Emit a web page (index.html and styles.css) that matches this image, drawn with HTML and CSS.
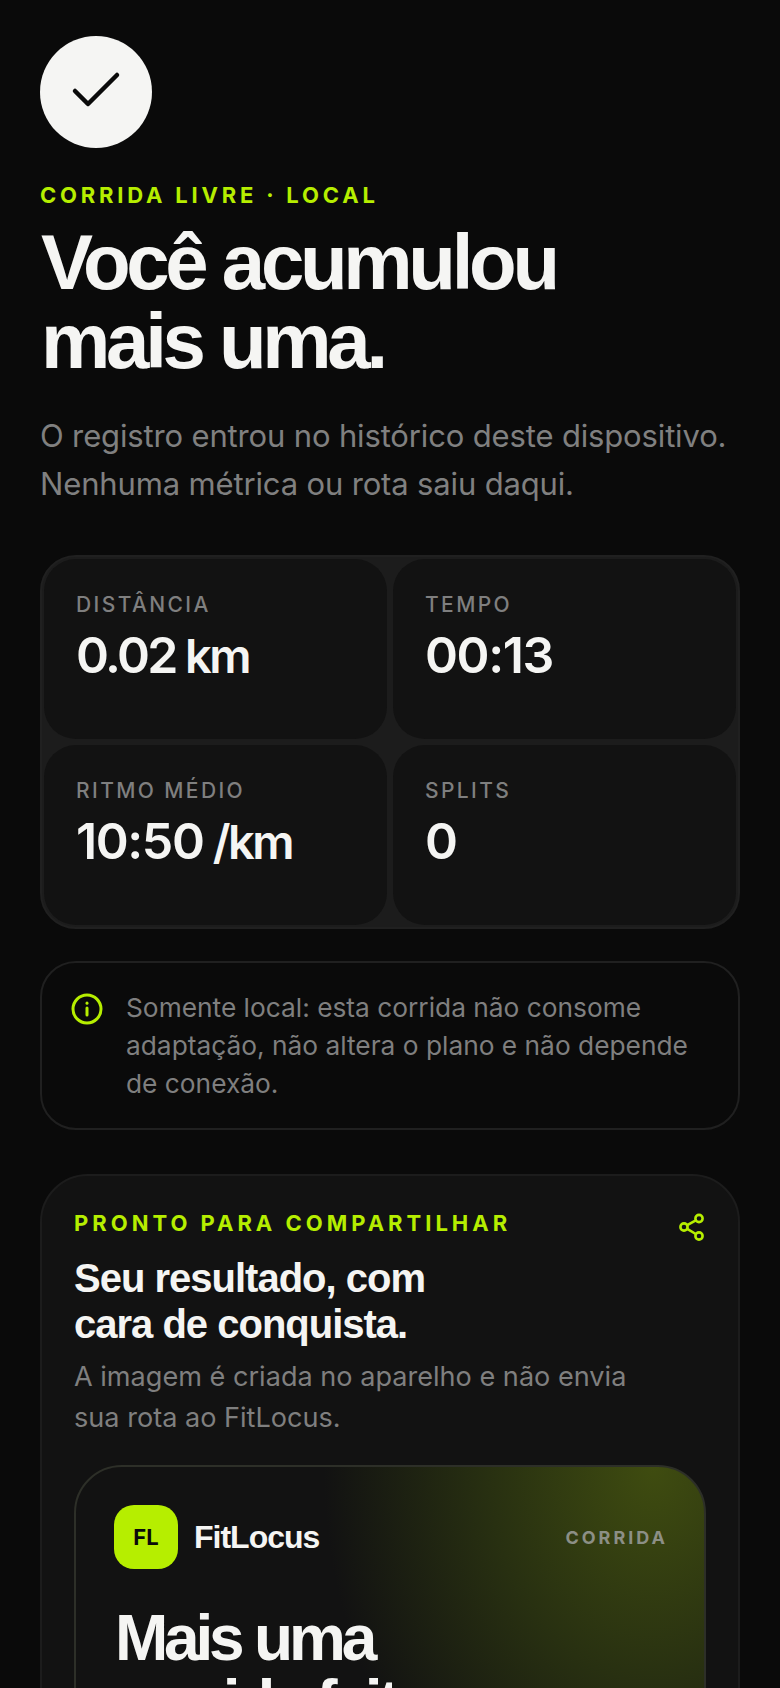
FILE: index.html
```html
<!DOCTYPE html>
<html lang="pt-BR">
<head>
    <meta charset="UTF-8">
    <meta name="viewport" content="width=device-width, initial-scale=1.0">
    <title>Corrida concluída</title>
    <link rel="stylesheet" href="styles.css">
</head>
<body>
    <main class="page">
        <div class="done-badge">
            <svg width="56" height="56" viewBox="0 0 56 56" fill="none" stroke="#0a0a0a" stroke-width="4.5" stroke-linecap="round" stroke-linejoin="round">
                <path d="M7 27 L20 40 L49 11"/>
            </svg>
        </div>

        <p class="eyebrow">CORRIDA LIVRE · LOCAL</p>
        <h1 class="title">Você acumulou<br>mais uma.</h1>
        <p class="lead">O registro entrou no histórico deste dispositivo.<br>Nenhuma métrica ou rota saiu daqui.</p>

        <section class="stats">
            <div class="stat">
                <div class="stat-label">DISTÂNCIA</div>
                <div class="stat-value"><span class="tight">0.02</span> <span class="unit">km</span></div>
            </div>
            <div class="stat">
                <div class="stat-label">TEMPO</div>
                <div class="stat-value">00:13</div>
            </div>
            <div class="stat">
                <div class="stat-label">RITMO MÉDIO</div>
                <div class="stat-value">10:50 <span class="unit">/km</span></div>
            </div>
            <div class="stat">
                <div class="stat-label">SPLITS</div>
                <div class="stat-value">0</div>
            </div>
        </section>

        <section class="notice">
            <svg class="notice-icon" width="32" height="32" viewBox="0 0 32 32" fill="none" stroke="#b6ee00" stroke-width="3" stroke-linecap="round">
                <circle cx="16" cy="16" r="14"/>
                <path d="M16 15 V22"/>
                <path d="M16 10 V10.2"/>
            </svg>
            <p class="notice-text">Somente local: esta corrida não consome adaptação, não altera o plano e não depende de conexão.</p>
        </section>

        <section class="share">
            <div class="share-head">
                <div>
                    <p class="share-eyebrow">PRONTO PARA COMPARTILHAR</p>
                    <h2 class="share-title">Seu resultado, com<br>cara de conquista.</h2>
                </div>
                <svg class="share-icon" width="28" height="28" viewBox="0 0 28 28" fill="none" stroke="#b6ee00" stroke-width="2.6" stroke-linecap="round">
                    <circle cx="21" cy="5.5" r="3.6"/>
                    <circle cx="6" cy="14" r="3.6"/>
                    <circle cx="21" cy="23" r="3.6"/>
                    <path d="M9.2 12.2 L17.8 7.3"/>
                    <path d="M9.2 15.8 L17.8 21"/>
                </svg>
            </div>
            <p class="share-text">A imagem é criada no aparelho e não envia<br>sua rota ao FitLocus.</p>

            <div class="preview">
                <div class="preview-head">
                    <div class="brand">
                        <div class="brand-logo">FL</div>
                        <div class="brand-name">FitLocus</div>
                    </div>
                    <div class="preview-tag">CORRIDA</div>
                </div>
                <div class="preview-title">Mais uma<br>corrida feita.</div>
            </div>
        </section>
    </main>
</body>
</html>
```

FILE: styles.css
```css
html, body {
    margin: 0;
    padding: 0;
    background-color: #0a0a0a;
}
body {
    font-family: Inter, "Liberation Sans", sans-serif;
    color: #f5f5f3;
}
p, h1, h2 {
    margin: 0;
}
.page {
    height: 1688px;
    overflow: hidden;
    padding: 36px 40px 0;
    box-sizing: border-box;
}

/* top block */
.done-badge {
    width: 112px;
    height: 112px;
    border-radius: 50%;
    background-color: #f5f5f3;
    display: flex;
    align-items: center;
    justify-content: center;
}
.eyebrow {
    margin-top: 33px;
    font-size: 22px;
    line-height: 28px;
    font-weight: 700;
    letter-spacing: 3.8px;
    color: #b6ee00;
}
.title {
    margin-top: 14px;
    padding-left: 1px;
    font-family: "Liberation Sans", Arial, sans-serif;
    font-size: 78px;
    line-height: 79px;
    font-weight: 700;
    letter-spacing: -4.3px;
    color: #f5f5f3;
}
.lead {
    margin-top: 31px;
    font-size: 31px;
    line-height: 48px;
    letter-spacing: -0.15px;
    color: #808080;
}

/* stats grid */
.stats {
    margin-top: 47px;
    display: grid;
    grid-template-columns: 1fr 1fr;
    gap: 6px;
    padding: 2px;
    background-color: #1c1c1c;
    border: 2px solid #202020;
    border-radius: 36px;
}
.stat {
    height: 180px;
    box-sizing: border-box;
    padding: 32px 32px 0;
    background-color: #121212;
    border-radius: 32px;
}
.stat-label {
    font-size: 21px;
    line-height: 28px;
    font-weight: 500;
    letter-spacing: 2.4px;
    color: #7f7f7f;
}
.stat-value {
    margin-top: 7px;
    font-size: 50px;
    line-height: 58px;
    font-weight: 600;
    letter-spacing: -1.4px;
    word-spacing: -2px;
    color: #f5f5f3;
}
.tight {
    letter-spacing: -2.6px;
}
.unit {
    font-size: 47px;
    letter-spacing: -2.5px;
}

/* local notice */
.notice {
    margin-top: 32px;
    display: flex;
    gap: 23px;
    padding: 26px 32px 25px 29px;
    border: 2px solid #202020;
    border-radius: 36px;
}
.notice-icon {
    flex: none;
    margin-top: 4px;
}
.notice-text {
    font-size: 26.3px;
    line-height: 38px;
    color: #7f7f7f;
}

/* share card */
.share {
    margin-top: 44px;
    padding: 30px 32px 40px;
    background-color: #121212;
    border: 2px solid #1c1c1c;
    border-radius: 48px;
}
.share-head {
    display: flex;
    justify-content: space-between;
    align-items: flex-start;
}
.share-icon {
    margin-top: 7px;
}
.share-eyebrow {
    font-size: 22px;
    line-height: 34px;
    font-weight: 700;
    letter-spacing: 4px;
    color: #b6ee00;
}
.share-title {
    margin-top: 15px;
    font-family: "Liberation Sans", Arial, sans-serif;
    font-size: 40px;
    line-height: 46px;
    font-weight: 700;
    letter-spacing: -1px;
    color: #f5f5f3;
}
.share-text {
    margin-top: 9px;
    font-size: 27.1px;
    line-height: 41px;
    color: #7f7f7f;
}

/* image preview */
.preview {
    margin-top: 27px;
    height: 500px;
    padding: 38px 36px 0 38px;
    box-sizing: border-box;
    border: 2px solid #2d2f28;
    border-radius: 48px;
    background: radial-gradient(ellipse 330px 430px at 92% 0, #3f4c10 0%, #283011 50%, #121212 100%), #121212;
}
.preview-head {
    display: flex;
    justify-content: space-between;
    align-items: center;
}
.brand {
    display: flex;
    align-items: center;
    gap: 16px;
}
.brand-logo {
    width: 64px;
    height: 64px;
    border-radius: 20px;
    background-color: #b6ee00;
    color: #0a0a0a;
    display: flex;
    align-items: center;
    justify-content: center;
    font-size: 22px;
    font-weight: 700;
}
.brand-name {
    font-family: "Liberation Sans", Arial, sans-serif;
    font-size: 32px;
    font-weight: 700;
    letter-spacing: -1px;
}
.preview-tag {
    font-size: 18px;
    font-weight: 700;
    letter-spacing: 3px;
    color: #8c8f86;
}
.preview-title {
    margin-top: 37px;
    padding-left: 1px;
    font-family: "Liberation Sans", Arial, sans-serif;
    font-size: 64px;
    line-height: 65px;
    font-weight: 700;
    letter-spacing: -4.2px;
    color: #f5f5f3;
}
```
